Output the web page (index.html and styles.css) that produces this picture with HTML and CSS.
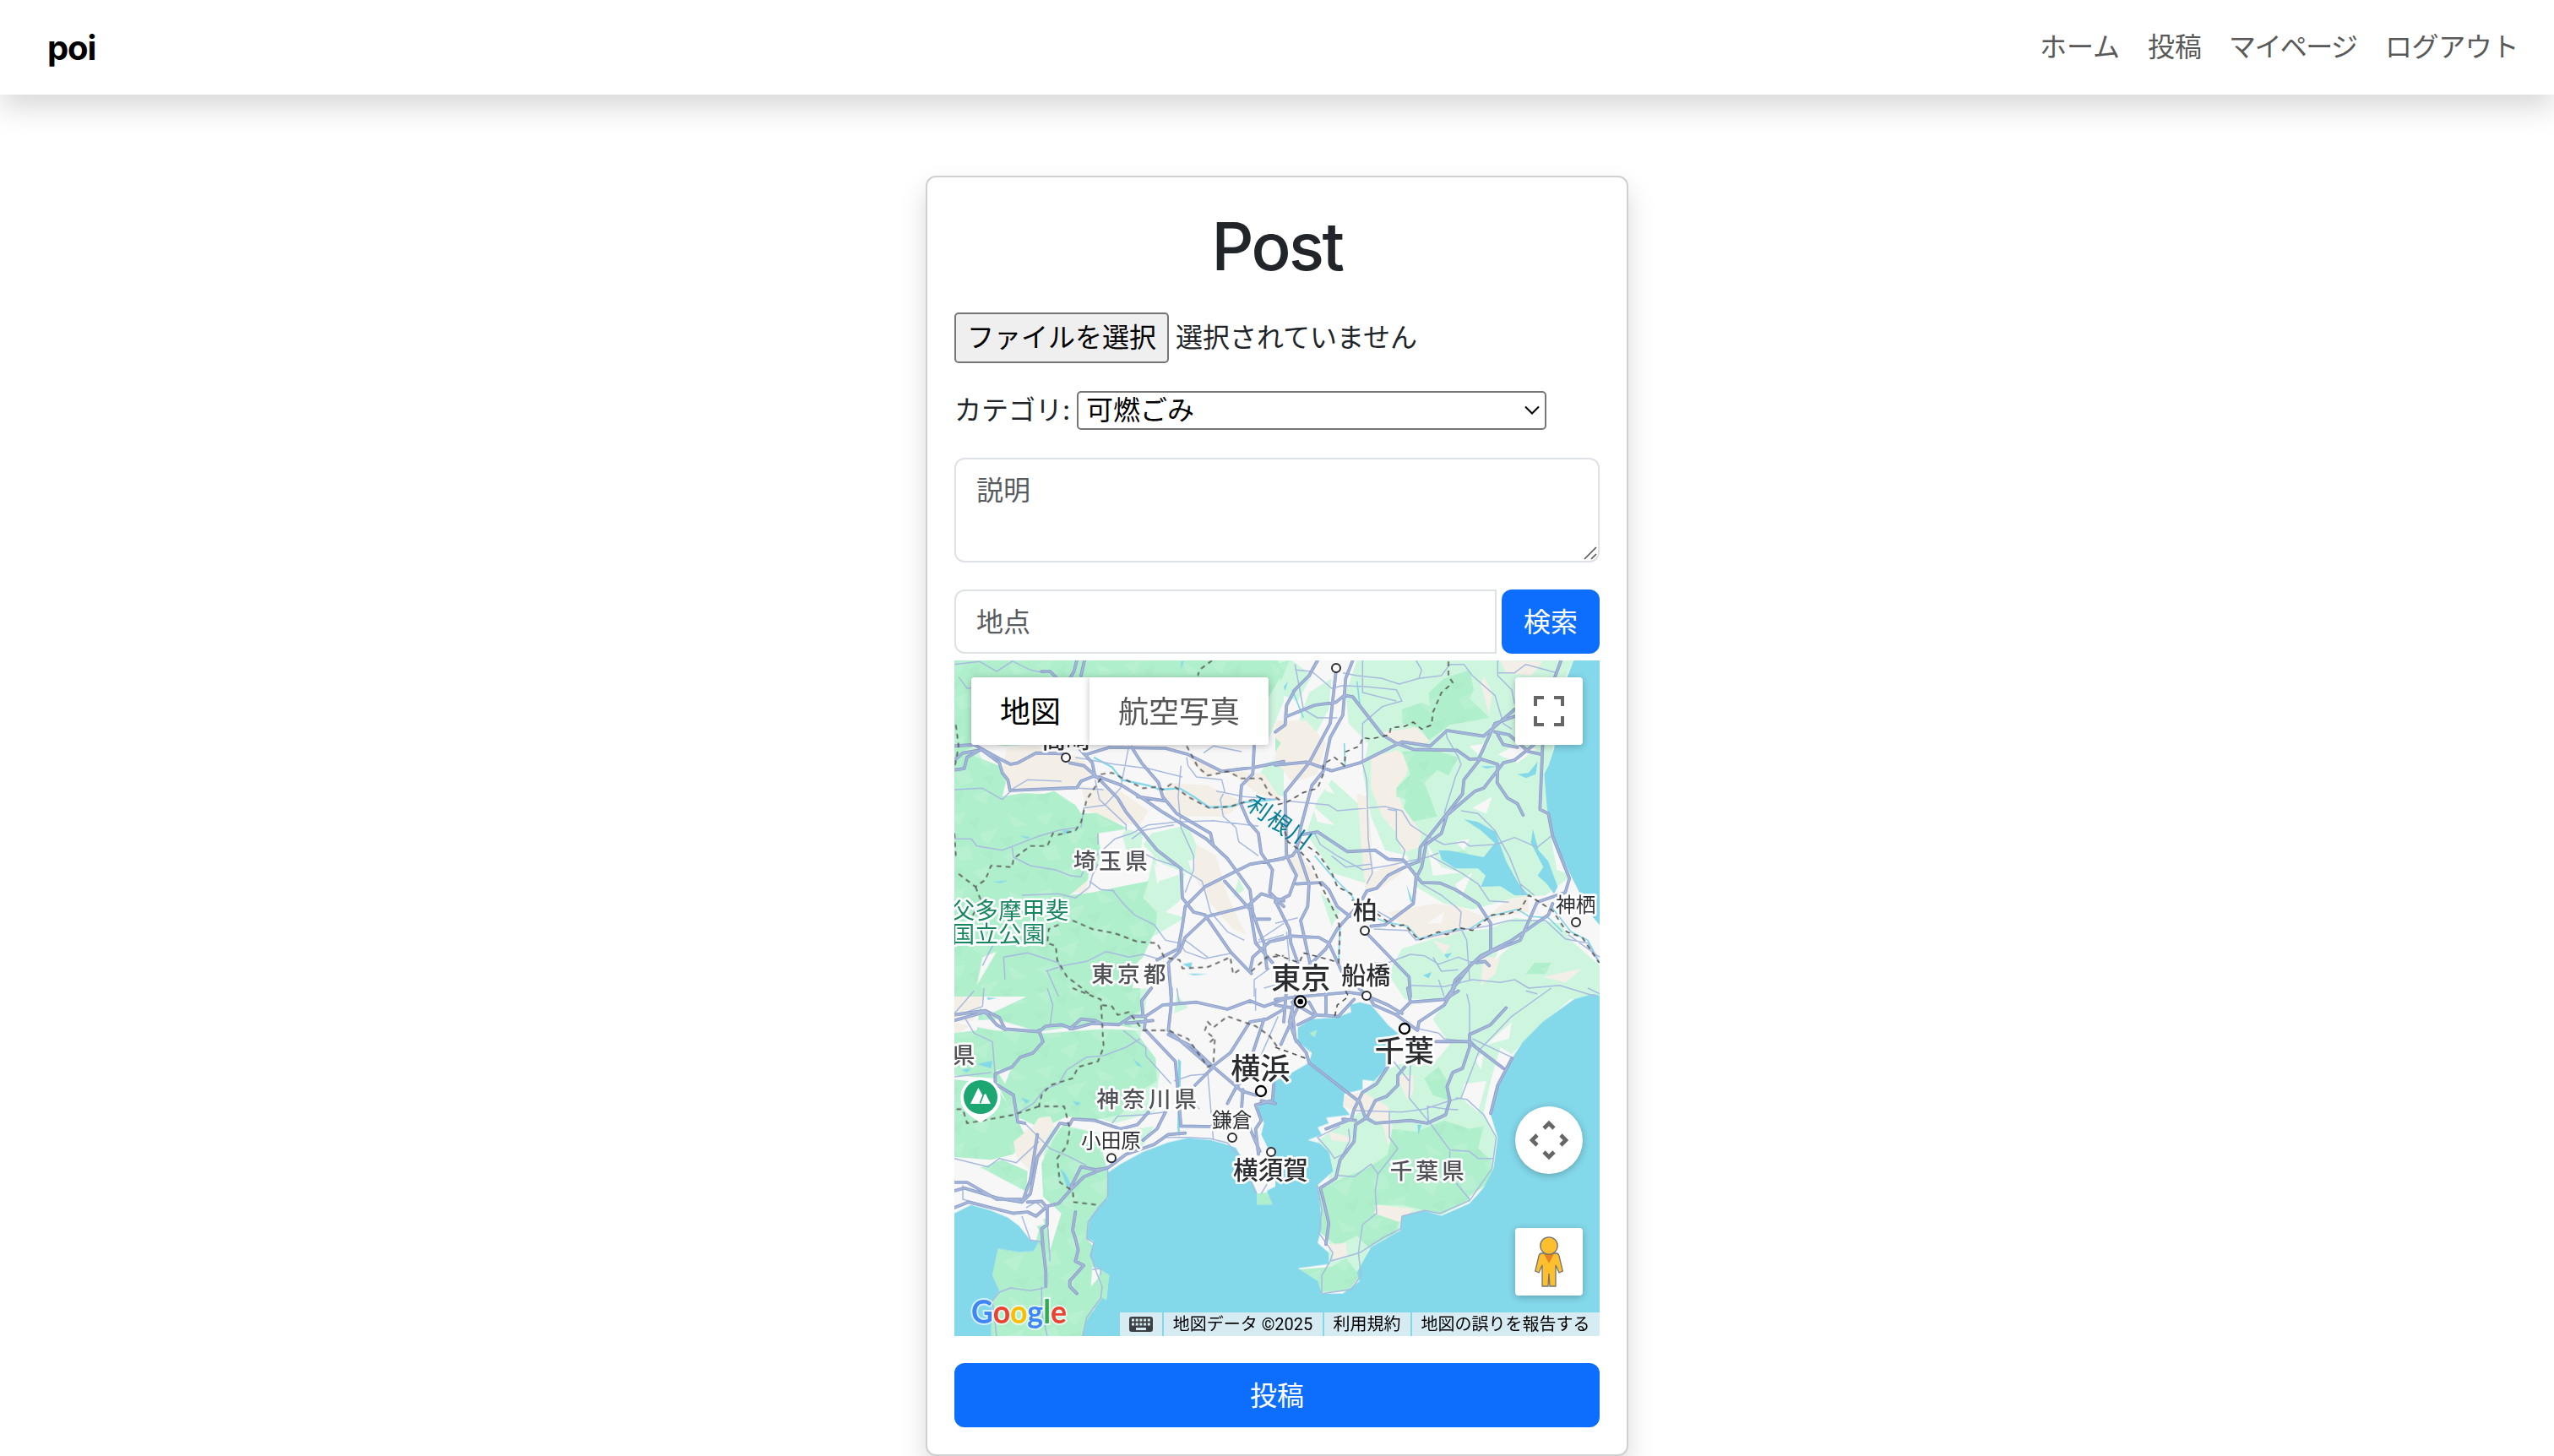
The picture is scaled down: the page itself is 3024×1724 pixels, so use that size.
FILE: index.html
```html
<!DOCTYPE html>
<html lang="ja">
<head>
<meta charset="utf-8">
<title>poi</title>
<link rel="stylesheet" href="styles.css">
</head>
<body>
<header class="navbar">
  <a class="brand">poi</a>
  <nav class="nav">
    <a class="nav-home">ホーム</a><a class="nav-post">投稿</a><a class="nav-mypage">マイページ</a><a class="nav-logout">ログアウト</a>
  </nav>
</header>
<main class="card">
  <h1>Post</h1>
  <div class="file-row"><button class="file-button">ファイルを選択</button><span>選択されていません</span></div>
  <div class="category-row">
    <label>カテゴリ:</label>
    <div class="select"><span>可燃ごみ</span><svg width="18" height="12" viewBox="0 0 18 12"><path d="M1 1.5 9 9.5 17 1.5" fill="none" stroke="#000" stroke-width="2"/></svg></div>
  </div>
  <div class="description"><span>説明</span><svg class="grip" width="16" height="16" viewBox="0 0 16 16"><path d="M1 15 15 1M9 15 15 9" stroke="#555" stroke-width="1.6"/></svg></div>
  <div class="search-row"><div class="place">地点</div><button class="primary">検索</button></div>

  <section class="map">
    <svg class="canvas" viewBox="0 0 2292 2400" width="764" height="800">
      <defs>
        <pattern id="facets" width="310" height="270" patternUnits="userSpaceOnUse">
          <path fill="#c0f3d8" d="M10 20 70 5 50 55ZM120 80 190 60 150 120 130 105ZM220 10 290 50 240 60ZM30 140 80 120 100 170 50 180ZM200 160 280 130 250 200ZM90 220 160 190 140 250Z"/>
          <path fill="#a7e8c5" d="M80 40 120 20 110 70ZM190 100 240 90 220 130ZM0 90 50 80 30 115ZM130 150 170 140 160 180ZM240 230 300 210 280 255ZM10 220 60 200 50 250Z"/>
        </pattern>
        <g id="forest">
          <g transform="translate(-30 -6)">
            <path d="M30 6H1180L1190 60 1140 150 1140 300H520L380 300 210 310 120 300 60 330 190 380 215 430 200 490 270 478 350 480 385 470 460 520 480 550 535 548 640 600 560 650 540 730 500 790 440 840 520 830 590 815 720 790 700 850 750 900 745 960 700 1060 670 1090 660 1200H30Z"/>
          </g>
          <g transform="translate(1140 -6)">
            <path d="M0 20 50 6 20 80ZM450 180 520 155 550 170 545 120 600 70 690 40 705 110 690 140 760 210 620 235 545 290 515 245 450 230ZM450 330 550 320 650 350 615 415 575 395 530 440 575 560 490 578 455 530 465 500 430 490 430 460 480 410ZM0 280 20 300 0 330ZM920 1080 980 1080 960 1120 890 1120ZM620 690 670 680 700 705 640 708Z"/>
          </g>
          <g transform="translate(-30 1164)">
            <path d="M120 70 160 90 350 0H690V80L640 110 700 190 745 250 750 330 700 360 620 450 520 470 430 455 340 500 240 450 170 320 30 310V160L110 150Z"/>
            <path d="M30 325 170 340 240 440 280 520 240 590 160 610 30 600ZM90 650 200 610 290 650 285 730 180 745 70 690ZM420 480 540 500 560 600 575 650V740L510 820 500 890 525 920 530 990 580 1020 570 1110 525 1140 485 1240H160L165 1110 190 1075 165 1020 185 925 260 938 310 935 330 860 310 820 360 820 370 930 410 800 345 740 340 620 380 540ZM1105 730 1145 725 1160 768 1105 772Z"/>
          </g>
          <g transform="translate(1140 1164)">
            <path d="M330 640 400 590 415 500 500 510 600 470 690 500 740 490 720 570 765 610 775 690 690 755 590 805 530 790 450 770 350 770 360 800 440 830 430 870 330 920 290 880 220 915 160 870 165 780 150 720 250 670ZM80 1000 160 1080 260 1075 300 1020 250 960 200 990ZM530 320 580 280 610 330 620 400 560 380Z"/>
          </g>
        </g>
        <g id="highways">
          <g transform="translate(-30 -6)">
            <path d="M340 45 370 45 400 75M440 70 455 45 465 6M480 60 492 6M30 310 100 305 190 355 230 375 255 370 320 335 415 337M30 395 65 390 75 350 125 322 190 370 200 405 220 430 228 468 465 458 480 435 530 415M30 360 60 335 120 325M440 370 490 380 545 428 610 495 640 545 750 680 835 745 840 850 880 900 920 910 1010 1040 1085 1118M545 420 625 450 705 500 770 545 925 640 1000 710 1080 820 1090 900 1110 960 1130 1010 1140 1100M470 315 520 370 530 420M500 340 580 315 780 318 860 340 980 400 1100 385 1200 365M660 315 695 370 755 440 770 490 820 550 940 620 950 665M680 490 780 505M1095 310 1090 410 1050 450 1045 510 1075 580 1110 620 1120 690 1160 750 1150 830 1200 880M1200 710 1080 730 920 810 850 880 840 950 825 1030 750 1070M1200 860 1120 835 1070 880 930 915 850 990 830 1040 790 1080 800 1200M1200 995 1150 1005 1090 1060 1080 1110M990 790 1080 890 1100 1010 1160 1080M1085 925 1150 925"/>
          </g>
          <g transform="translate(1140 -6)">
            <path d="M0 260 35 235 40 165 70 110 120 60 150 6M40 205 140 165 215 155 245 130 275 135 380 270 430 300 490 322 645 325 690 357 725 355 790 375M215 50 195 230 120 370 35 475 40 700 75 770 50 840 0 865M275 6 250 70 240 200 195 280 170 400 130 450 90 600 75 680 60 700 0 715M0 378 110 367 200 398 300 370 450 295 550 310 610 255 740 275 850 180M1015 6 980 100M725 350 780 230 850 205M780 260 830 270 900 330 945 340M790 270 810 305 860 315M925 300 850 360 810 370 740 460 710 470 610 555 590 620 535 660 520 740 500 780 490 870 390 945 340 950M725 360 670 430 665 480 515 670 510 720 470 735 400 770 360 815 325 825 300 870 220 960 180 1030 120 1090M790 375 788 440 825 495 860 515 880 555M950 300 940 535 970 550 985 630 1045 780 1030 830 930 865 870 1000 770 1040 700 1080 610 1200M75 675 90 625 150 615 255 685 355 680 400 712 455 715 520 795 585 797 640 820 720 870 765 940 765 1040M75 800 165 795 190 820 220 880 265 915M0 860 50 960 55 1010 80 1080M80 680 120 800 115 880 90 930 125 1090M0 1000 60 985 155 990 190 1010 240 1120 330 1200M330 980 475 1130 480 1200M985 870 970 910 840 1000 730 1055 640 1140 620 1200M715 1080 745 1075 760 1090"/>
          </g>
          <g transform="translate(-30 1164)">
            <path d="M30 95 140 80 190 105 210 145 330 155 355 135 410 130 450 145 520 125 615 130 660 100 710 100 770 60 890 50 1000 75 1080 45 1130 65 1200 40M30 115 140 85 180 130 210 147M440 145 480 110 530 115 560 130M700 100 695 45 730 0M800 0 800 60 790 150 940 280M710 100 705 145 815 260 835 490 950 492 1060 480M640 125 735 115M330 150 345 190 310 230 265 245 235 280 175 305 175 340 240 380 255 475 280 480M790 165 870 205 950 280 1050 365 1100 380M950 280 885 345M945 280 1010 230 1080 120 1140 110 1200 75M1130 110 1080 260 1000 410M1055 360 1050 430 1115 580M30 720 65 710 180 745 270 760 300 730 325 600 405 480 440 485 450 465 530 470 620 500 680 485 720 440M30 690 75 690 180 750 275 750 300 680 325 520M30 780 80 760 240 800 290 795 320 810 360 775 400 765 440 720 490 670 540 650 580 635 640 590 740 555 790 520 850 515M290 760 340 757 360 780 360 840 340 855 345 920 355 1010 355 1060M440 715 480 635 530 645 570 640M700 540 750 500 780 440M460 795 450 860 460 890 470 930 460 970 490 985 440 1040 440 1060 465 1085M1165 330 1160 400 1100 415 1120 470 1100 500 1110 590M1170 410 1120 400"/>
          </g>
          <g transform="translate(1140 1164)">
            <path d="M0 40 90 30 260 15 330 25 350 60 430 95 505 150M0 60 60 70 70 180 110 230 120 265 300 405 320 460 355 480 480 470 540 480 605 450 620 400 610 350 630 300 665 285 690 210 690 165 765 130 820 70M60 50 135 95 225 100 280 40M80 130 140 100M470 0 480 50 450 80 430 95M480 50 600 40 650 10M505 150 510 120 600 60 635 0M570 190H685L810 285M840 250 790 345 765 445M400 280 360 340 310 370 280 430 270 465 180 500M460 280 435 310 435 345 395 385 355 400 325 460 285 485 280 545 230 610 215 675 160 710 175 770 190 835 180 910M240 465 285 470M330 30 400 60 450 90M180 0 180 90M40 0 30 120M70 30 50 120 75 190M90 45 20 200M120 50 145 95"/>
          </g>
        </g>
      </defs>

      <rect width="2292" height="2400" fill="#f7f7f7"/>
      <g fill="#cef6df">
        <g transform="translate(-30 -6)"><path d="M30 6H1200V150L1140 300H100L30 350V6ZM330 360 410 350 450 410 410 430 300 405ZM1200 350 1140 370 1100 430 1160 480 1200 490ZM730 620 860 590 905 700 860 720 880 770 770 730 700 660ZM740 690 760 790 850 760 830 860 780 900 850 920 730 990 670 900 720 780ZM30 300 110 320 140 380 30 480ZM890 450 860 480 940 500ZM620 600 700 620 690 700 640 680ZM1040 780 1060 820 1020 850Z"/></g>
        <g transform="translate(1140 -6)"><path d="M0 6H60L130 60 80 150 0 120ZM290 6 1060 6 1010 110 985 330 955 420 965 530 1010 660 1040 780 960 840 850 850 700 890 600 870 500 810 470 700 390 680 340 560 310 400 330 300 260 230 250 120ZM120 120 200 70 190 180 130 290 80 230ZM150 500 200 430 300 520 310 700 330 800 200 760 110 620ZM450 1030 640 970 760 960 850 920 1010 940 1050 1000 1152 1090V1210H460L400 1120ZM160 830 230 900 200 950Z"/></g>
        <g transform="translate(-30 1164)"><path d="M30 0H120L60 110 30 120ZM560 20 720 0 690 180 760 300 740 440 600 480 500 450ZM620 510 740 490 700 560 620 580ZM820 20 860 70 810 90ZM340 480 420 500 560 590 450 700 350 640Z"/></g>
        <g transform="translate(1140 1164)"><path d="M640 0H960L1060 30 930 140 840 235 800 210 770 310 740 440 785 530 770 660 690 740 530 790 450 850 330 930 300 1040 160 1080 190 980 190 680 200 630 150 540 230 490 300 440 300 380 380 300 440 270 560 270 620 200 560 110Z"/></g>
      </g>
      <g fill="#f4efe6">
        <g transform="translate(-30 -6)"><path d="M215 320 310 310 480 350 520 400 480 450 300 465 225 460 200 400ZM480 450 620 470 720 540 690 590 600 580 500 540ZM790 440 930 450 1060 510 990 560 850 560 770 500ZM860 350 960 390 1130 410 1190 500 1110 480 1000 400 920 420ZM890 660 960 700 1000 840 1065 980 1020 960 940 870 880 770ZM510 740 550 770 500 830 440 830ZM90 1120 160 1140 150 1200 80 1200Z"/></g>
        <g transform="translate(1140 -6)"><path d="M0 220 110 220 180 300 150 410 60 440 0 360ZM340 350 430 325 480 350 465 410 430 460 450 520 520 620 510 670 450 690 430 620 380 560 340 460ZM290 480 330 490 350 760 430 720 450 760 370 820 320 820ZM400 900 560 870 650 880 750 920 820 860 900 840 900 900 780 920 680 960 600 990 510 1000 430 930ZM740 60 770 120 760 200 730 90ZM800 6 950 10 910 60 820 50ZM380 260 500 245 550 290 510 310 410 290ZM740 1060 800 1060 780 1120 730 1160ZM950 1130 1090 1100 1030 1150ZM560 1000 620 1020 600 1050ZM30 680 100 710 150 780 110 800 50 750Z"/></g>
        <g transform="translate(-30 1164)"><path d="M30 20 150 0 90 130 30 170ZM300 170 360 150 350 210 310 230ZM230 540 310 490 330 460 370 460 350 580 310 660 250 590ZM350 850 370 900 360 970 345 940Z"/></g>
        <g transform="translate(1140 1164)"><path d="M240 385 310 370 400 420 420 510 455 550 400 555 380 480 300 440 240 420ZM430 310 490 310 490 370 470 400ZM360 770 490 785 440 830 350 800ZM190 510 270 530 270 550 200 540ZM190 910 250 905 255 950 210 970Z"/></g>
      </g>
      <use href="#forest" fill="#b0efcc"/>
      <use href="#forest" fill="url(#facets)" opacity=".45"/>
      <path transform="translate(1140 1164)" fill="#f4efe6" d="M360 770 490 785 440 830 350 800ZM190 910 250 905 255 950 210 970Z"/>
      <path transform="translate(-30 1164)" fill="#f4efe6" d="M240 545 310 490 330 460 370 455 385 490 340 560 310 660 250 600Z"/>
      <g fill="#f7f7f7">
        <g transform="translate(-30 -6)"><path d="M540 620 640 605 600 660 550 690ZM510 735 560 740 540 800 500 820ZM740 730 780 760 750 800ZM130 1060 180 1040 110 1160Z"/></g>
        <g transform="translate(1140 -6)"><path d="M130 520 210 590 150 580ZM170 420 210 480 180 470ZM640 650 690 640 670 680ZM640 800 700 760 660 850ZM540 660 590 740 660 760 560 770ZM790 340 850 310 930 320 860 370ZM700 530 770 490 750 550ZM980 640 1030 760 1000 750ZM540 940 600 900 590 940ZM690 310 760 300 720 340ZM800 1010 860 1000 780 1070Z"/></g>
        <g transform="translate(-30 1164)"><path d="M30 120 180 110 330 155 560 120 700 150 560 145 350 160 170 150 70 130ZM180 290 230 290 210 340ZM440 470 560 480 650 500 560 520 430 490ZM30 620 130 640 300 730 320 640 330 740 350 840 300 850 80 760 30 780ZM520 990 550 1000 540 1030 515 1060Z"/></g>
        <g transform="translate(1140 1164)"><path d="M750 200 840 120 830 180ZM670 340 750 330 720 440 660 390ZM710 250 740 230 730 290ZM690 740 745 700 690 770Z"/></g>
      </g>
      <g fill="#83d8ea">
        <path transform="translate(1140 -6)" d="M1060 6 1035 70 1015 180 990 320 970 380 955 410 965 530 990 640 1045 760 1085 840 1130 920 1160 955V6ZM580 680 620 682 740 705 780 655 730 610 670 570 720 580 782 615 820 720 865 800 900 840 850 840 800 808 730 810 747 770 720 745 640 745 592 715ZM915 605 935 680 970 720 1003 810 990 835 965 800 932 770 952 740 908 655ZM860 410 900 405 932 365 925 410 890 424ZM600 1050 628 1045 610 1065ZM525 1125 555 1112 545 1135ZM30 100 45 80 35 115ZM730 382 790 382 750 390ZM465 800 488 860 480 865Z"/>
        <path transform="translate(-30 1164)" d="M575 655 620 625 700 582 790 548 860 532 940 540 985 552 1030 567 1060 620 1080 670 1105 725 1105 770 1160 768 1140 720 1200 690V620L1160 600 1120 520 1130 480 1110 430 1110 410 1165 390V340L1200 325V1240H485L500 1180 555 1100 570 1110 580 1020 530 990 510 950 525 900 500 890 510 820 545 770 575 745ZM30 800 90 770 160 790 220 815 260 845 300 895 330 900 310 935 260 938 185 925 165 1020 190 1075 165 1110 160 1240H30ZM405 640 425 660 445 700 430 705ZM110 270 165 258 160 285ZM55 290 90 285 75 300ZM825 250 835 260 830 530 822 500ZM665 250 700 280 680 275ZM450 400 480 408 465 418ZM265 388 300 400 285 410ZM145 32 180 35 150 42Z"/>
        <path transform="translate(1140 1164)" d="M0 330 60 300 120 265 130 230 80 190 80 140 130 110 215 105 270 85 265 60 300 50 340 60 400 130 440 165 400 220 390 290 350 330 310 325 310 360 245 375 240 420 265 450 180 460 190 480 150 495 165 520 115 540 155 550 190 580 205 650 150 700 160 780 165 850 150 905 190 940 190 980 80 995 150 1040 165 1085 240 1085 300 1040 290 1010 340 920 445 860 450 810 530 790 590 808 690 765 740 710 775 640 790 530 765 450 790 350 840 250 880 190 950 120 1060 40 1130 20 1160 30V1240H0ZM505 485 520 485 508 520Z"/>
        <path transform="translate(-30 -6)" d="M840 1085 875 1078 870 1100ZM860 1118 930 1120 880 1125ZM415 610 440 607 420 625ZM165 792 220 787 195 797ZM260 628 298 633 290 640ZM835 10 845 8 835 40Z"/>
      </g>
      <path transform="translate(1140 1164)" fill="#b0efcc" d="M120 160 148 148 140 175Z"/>
      <g fill="none" stroke="#83d8ea" stroke-width="7">
        <path transform="translate(-30 -6)" d="M525 350 590 385 625 430 720 450 760 465 830 460 880 490 935 528 1010 525 1060 510 1170 500" />
        <path transform="translate(1140 -6)" stroke-width="5" d="M290 80 300 160M60 110 100 210M245 300 248 380M140 700 200 770 270 840 310 900 390 935 470 950 510 995 640 960 690 960 760 915 860 890 900 915 970 920 1020 970M980 880 1050 970 1110 1000 1152 1080M230 940 225 1080"/>
      </g>
      <g class="local-roads">
        <path transform="translate(-30 -6)" d="M45 65 75 105 140 100M30 20 120 10 180 45 240 6M240 10 300 40 350 50M30 465 130 460 200 500 240 460 290 430 410 435M460 350 600 375 720 390 840 420M650 310 620 460 565 520 490 530 480 600M530 430 545 500 640 590 640 610M470 460 560 465M855 350 860 380 890 420 980 430 990 470 975 500 985 560 1030 600M835 380 825 490 835 600 880 700 880 750 850 830M30 640 90 640 110 665 200 680 240 665 330 630 400 610 460 600M235 670 240 705 300 735 390 750 440 770 480 775 495 735 600 640 660 620 720 590 820 580 950 575 1110 595M590 820 630 870 670 910 740 945 780 1000 830 1010 850 1040 920 1065 1020 1045M400 835 460 850 510 810 520 770 540 730M510 790 550 820 600 825M270 840 400 835M355 1110 420 1090 500 1075 570 1040 650 1060 700 1050 750 1065M360 1110 400 1200M210 1140 205 1060 290 1045 400 1080 410 1110M130 1090 160 1030 180 1000M915 335 950 310 1050 330M960 470 1060 490 1180 500M700 690 750 715 830 740 910 790 940 900 1000 970 1060 1000M850 1000 930 1060M660 640 700 610 810 590M1200 980 1100 1010M540 620 540 660M1095 1200V1140L1150 1100M1200 1150 1130 1170M1110 1000 1200 940M1030 600 1040 650 1110 700"/>
        <path transform="translate(1140 -6)" d="M70 40 130 45 200 105 240 95 330 100 430 110 450 150 380 170 310 230 310 370 325 430 330 640 345 760 325 800M70 20 100 180 150 210 220 210M310 6 310 120 430 150M240 50 290 60 380 70 440 90 510 70 590 60 620 20 670 20 700 60 780 130 810 230 840 250M500 6 520 40 510 70M790 50 850 50 890 20 1000 50M790 6 790 60 840 110 850 160M40 505 190 520 220 540 390 525 450 540 480 590 540 630 600 660 670 650 690 665 780 660 850 635 930 670 980 630M400 535 430 540 430 640 460 680 450 720M660 540 720 550 780 610 830 700 870 800 920 840M600 550 640 420 660 375 650 350 610 280 605 250M140 620 160 660 220 700 310 750 400 735 540 705 580 690M200 700 250 740 340 730M550 700 660 760 720 800 760 860 830 865M520 800 590 840 640 880 660 900 655 950 680 1000 690 1140M350 960 470 965 500 1000 650 965 750 950 830 930 960 930 1030 995 1110 1010 1150 1080M330 1080 400 1080 480 1050 530 1055 580 1085 650 1060 700 1080M560 1060 590 1110 650 1105M0 940 80 920M1040 980 1152 1060M480 1160 600 1165 700 1140 800 1150 850 1140 900 1170 1010 1160 1140 1200M580 1140 600 1200M870 800 880 840M360 895 420 930M40 970 50 1070 30 1130"/>
        <path transform="translate(-30 1164)" d="M30 90 100 10M60 90 130 65 135 0M70 110 100 160 165 190 175 310M30 315 160 300M245 450 310 410 350 360 400 340 430 290 500 245 560 240 640 210 690 180M280 480 330 530 370 570 430 595 500 630M30 605 150 635 190 605 250 620 330 545M60 700V750L130 770M360 0 380 60 370 130M630 150 680 190 710 210 710 240 800 340M590 480 610 455 700 450 780 440M1070 490 1060 440M930 300 950 540M810 330 870 310 930 305M835 350 900 430M820 0 830 60M780 530 860 530 940 535 1000 550 1060 620 1100 730M575 640V740L505 830 500 890 525 905 515 950 535 1010 555 1060 550 1100 500 1170 485 1236M270 810 300 895 335 900 345 930M350 1065 300 1075 230 1065 190 1080 165 1110 180 1236M340 1060 340 1150 360 1236M285 780 320 760 350 785 330 800M520 1000 550 995 550 1020M360 820 370 970M1100 0 1100 80M1180 100 1110 260 1000 400M1120 730 1150 680"/>
        <path transform="translate(1140 1164)" d="M680 20 690 60V180L725 220 660 390 620 400 530 430 450 440 285 435M480 270 475 390 550 480 620 575 690 580 720 605 775 605M510 145 580 160 600 180 690 190M640 390 680 395 740 450 785 530 770 640 690 755 585 800 530 790 450 810 445 855 385 885 300 940 195 970M725 220 840 100 980 0M890 10 930 20M545 480 540 420 610 430 650 432M405 440 405 530 435 570 365 660 355 720 360 800 310 840 295 940 305 1020 270 1070 165 1085 165 1020 195 970 205 940M365 660 340 625 280 670 215 665M230 490 150 530 190 575 210 605 240 590 265 540 260 500M150 700 165 790 155 870 205 940M640 690 690 750M620 580 620 650M420 260 475 330M700 180 850 250M1110 0 1152 20"/>
      </g>
      <use href="#highways" class="road-edge"/>
      <use href="#highways" class="road-fill"/>
      <g class="borders">
        <path transform="translate(-30 -6)" d="M945 6 900 40 895 60M35 235 45 310 30 390M855 310 895 385 930 415 1000 400 1050 425 1120 425 1150 480 1200 510M550 410 590 405 700 460 750 455 770 465 800 445 860 490 935 530 1010 525 1090 500M550 425 500 500 480 580 460 610 400 625 380 620 360 665 300 665 240 710 235 740 160 735 140 785 105 810 40 760M105 810 125 860 90 920M450 930 520 960 600 975 680 1005 750 1010 775 1060 830 1070 840 1100 930 1095 1010 1060 1020 1120 1050 1100M400 945 365 960 360 1010 390 1020 395 1070 430 1130 470 1160 520 1200M1085 1110 1140 1060 1200 1055M30 620 35 700"/>
        <path transform="translate(1140 -6)" d="M615 10V60L630 85 590 120 560 190 555 235 520 250 490 225 460 240 410 245 405 270 340 285 310 280 300 310 250 330 245 380 210 350 170 375 170 410 150 460 100 475 40 510 0 520M0 560 30 600 45 650 80 675 130 730 150 780 220 920 230 960 225 1080 195 1070 100 1045 85 1080 0 1050M90 650 150 690 200 760 220 810 270 835 275 860M360 905 420 950 460 945 510 1000 580 970 610 980 650 955 700 965 770 910 830 905 870 890 900 840 985 895 1035 970 1090 990 1150 1080"/>
        <path transform="translate(-30 1164)" d="M450 0 550 40 555 130 560 210 540 260 470 280 450 320 370 345 340 380 330 420 420 420 440 500 430 560 395 605 405 690 450 720 455 760 540 770M555 60 590 65 610 95 650 85 700 150 790 150 860 180 930 280 950 270 955 180 920 150 930 120 950 140 1000 100 1100 135 1150 170 1185 220M330 420 240 450 75 480 60 430 30 430M950 180 930 200"/>
        <path transform="translate(1140 1164)" d="M250 10 260 30 220 60 210 105M0 210 110 250"/>
      </g>
      <g class="labels">
        <g class="prefecture">
          <text x="422" y="740">埼玉県</text><text x="487" y="1142">東京都</text><text x="-7" y="1431">県</text><text x="505" y="1588">神奈川県</text><text x="1547" y="1843">千葉県</text>
        </g>
        <g class="park"><text x="-10" y="919">父多摩甲斐</text><text x="-10" y="1002">国立公園</text></g>
        <text class="river" transform="translate(1034 524) rotate(36)">利根川</text>
        <text x="310" y="311" font-size="87">高崎</text>
        <text x="1126" y="1166" font-size="105">東京</text><text x="982" y="1487" font-size="105">横浜</text><text x="1493" y="1426" font-size="105">千葉</text>
        <text x="1415" y="922" font-size="87">柏</text><text x="1375" y="1151" font-size="87">船橋</text><text x="990" y="1842" font-size="89">横須賀</text>
        <g font-weight="400"><text x="2136" y="894" font-size="71">神栖</text><text x="915" y="1660" font-size="71">鎌倉</text><text x="450" y="1732" font-size="71">小田原</text></g>
      </g>
      <g fill="#fff" stroke="#2b2d30" stroke-width="6">
        <circle cx="1356" cy="27" r="15"/><circle cx="396" cy="345" r="15"/><circle cx="1458" cy="960" r="15"/><circle cx="2208" cy="930" r="15"/><circle cx="1464" cy="1191" r="15"/><circle cx="987" cy="1695" r="15"/><circle cx="1125" cy="1746" r="15"/><circle cx="558" cy="1768" r="15"/>
        <g stroke="#000" stroke-width="7"><circle cx="1599" cy="1308" r="18"/><circle cx="1089" cy="1530" r="18"/><circle cx="1229" cy="1212" r="20"/></g>
        <circle cx="1229" cy="1212" r="10" fill="#000" stroke="none"/>
      </g>
      <path d="M93 1642C55 1616 22 1600 22 1552A71 71 0 0 1 164 1552C164 1600 130 1616 93 1642Z" fill="#fff"/>
      <circle cx="93" cy="1551" r="60" fill="#1ba672"/>
      <path d="M57 1575 85 1518 101 1546 111 1539 129 1575Z" fill="#fff"/><path d="M91 1573 103 1544" stroke="#1ba672" stroke-width="5"/>
    </svg>
    <div class="map-types"><button class="active">地図</button><button>航空写真</button></div>
    <button class="control fullscreen"><svg width="36" height="36" viewBox="0 0 36 36"><path d="M2 12V2H12M24 2H34V12M34 24V34H24M12 34H2V24" fill="none" stroke="#666" stroke-width="4"/></svg></button>
    <button class="control pan"><svg width="46" height="46" viewBox="0 0 46 46"><path d="M17 9 23 3 29 9M17 37 23 43 29 37M9 17 3 23 9 29M37 17 43 23 37 29" fill="none" stroke="#666" stroke-width="4.6"/></svg></button>
    <button class="control pegman"><svg width="34" height="60" viewBox="0 0 34 60"><path d="M8 20H26Q28 20 29 23L33.300 41 29 43 25 34V59H18L17 44 16 59H9V34L5 43 .8 41 5 23Q6 20 8 20Z" fill="#fdbf2d" stroke="#737373" stroke-width="1.300"/><path d="M11 20.500H23L17 32Z" fill="#e38125"/><circle cx="17" cy="11" r="10.200" fill="#fdbf2d" stroke="#737373" stroke-width="1.300"/></svg></button>
    <svg class="google" width="130" height="50" viewBox="0 0 130 50"><text x="8" y="35" textLength="113" lengthAdjust="spacingAndGlyphs"><tspan fill="#4285f4">G</tspan><tspan fill="#ea4335">o</tspan><tspan fill="#fbbc04">o</tspan><tspan fill="#4285f4">g</tspan><tspan fill="#34a853">l</tspan><tspan fill="#ea4335">e</tspan></text></svg>
    <div class="attribution">
      <span class="keys"><svg width="28" height="18" viewBox="0 0 28 18"><rect width="28" height="18" rx="3" fill="#3c4043"/><path d="M3 4H25M3 9H25" stroke="#d6ebf2" stroke-width="3.200" stroke-dasharray="3 1.700"/><path d="M8 14.500H20" stroke="#d6ebf2" stroke-width="3"/></svg></span><span class="data">地図データ ©2025</span><span class="terms">利用規約</span><span class="report">地図の誤りを報告する</span>
    </div>
  </section>
  <button class="primary submit">投稿</button>
</main>
</body>
</html>
```
FILE: styles.css
```css
* { box-sizing: border-box; }
body { margin: 0; height: 1724px; overflow: hidden; background: #fff; color: #212529; font: 32px/48px Inter, "Noto Sans CJK JP", sans-serif; }
button { margin: 0; padding: 0; border: 0; font: inherit; }
.navbar { height: 112px; padding: 0 40px 0 56px; display: flex; justify-content: space-between; align-items: center; background: #fff; box-shadow: 0 16px 32px rgba(0,0,0,.15); }
.brand { color: #000; font-size: 40px; font-weight: 700; letter-spacing: -1.1px; padding-top: 2px; }
.nav { display: flex; gap: 32px; color: #595959; white-space: nowrap; }
.nav-home { width: 96px; }
.nav-post { width: 64px; }
.nav-mypage { width: 153px; letter-spacing: -1.6px; }
.nav-logout { width: 160px; letter-spacing: -.4px; }
.card { width: 832px; height: 1516px; margin: 96px auto 0; padding: 30px 32px 32px; border: 2px solid #cfd0d1; border-radius: 12px; background: #fff; box-shadow: 0 16px 32px rgba(0,0,0,.15); display: flex; flex-direction: column; }
h1 { margin: 7px 0 33px; height: 90px; font-size: 78px; line-height: 90px; font-weight: 500; text-align: center; letter-spacing: -2.6px; }
.file-row { height: 60px; display: flex; align-items: center; gap: 8px; }
.file-button { width: 254px; height: 60px; border: 2px solid #767676; border-radius: 5px; background: #efefef; color: #000; white-space: nowrap; }
.category-row { height: 46px; margin-top: 33px; display: flex; align-items: center; }
.category-row label { width: 145px; white-space: nowrap; }
.select { width: 556px; height: 46px; padding: 0 6px 0 9px; display: flex; align-items: center; justify-content: space-between; border: 2px solid #767676; border-radius: 5px; color: #000; }
.description { position: relative; height: 124px; margin-top: 33px; padding: 13px 24px; border: 2px solid #dee2e6; border-radius: 12px; color: #595c5f; }
.grip { position: absolute; right: 1px; bottom: 1px; }
.search-row { height: 76px; margin-top: 32px; display: flex; gap: 6px; }
.place { flex: 1; padding: 13px 24px; border: 2px solid #dee2e6; border-radius: 12px 0 0 12px; color: #595c5f; }
.primary { width: 116px; height: 76px; padding-top: 1px; border-radius: 12px; background: #0d6efd; color: #fff; }
.primary.submit { width: 100%; margin-top: 32px; }
.map { position: relative; width: 764px; height: 800px; flex: none; margin-top: 8px; overflow: hidden; }
.canvas { display: block; }
.local-roads { fill: none; stroke: #a8bbdf; stroke-width: 4.5; stroke-linejoin: round; }
.road-edge { fill: none; stroke: #8195c2; stroke-width: 11; stroke-linejoin: round; stroke-linecap: round; }
.road-fill { fill: none; stroke: #a8b8db; stroke-width: 7; stroke-linejoin: round; stroke-linecap: round; }
.borders { fill: none; stroke: #555; stroke-width: 5; stroke-dasharray: 17 15; }
.labels { font-family: "Noto Sans CJK JP", sans-serif; fill: #2b2d30; stroke: #fff; stroke-width: 16; stroke-linejoin: round; paint-order: stroke; font-weight: 500; }
.prefecture { font-size: 80px; letter-spacing: 12px; fill: #505257; }
.park { font-size: 82px; letter-spacing: 1.5px; fill: #16865f; font-weight: 400; }
.river { font-size: 82px; letter-spacing: 5px; fill: #087f98; stroke: none; font-weight: 400; }
.map-types { position: absolute; left: 20px; top: 20px; width: 352px; height: 80px; display: flex; border-radius: 4px; background: #fff; box-shadow: 0 1px 8px rgba(0,0,0,.25); overflow: hidden; font-size: 36px; }
.map-types button { width: 212px; background: #fff; color: #565656; padding-top: 2px; }
.map-types .active { width: 140px; color: #000; }
.map-types button + button { position: relative; box-shadow: 0 0 8px rgba(0,0,0,.25); }
.control { position: absolute; right: 20px; width: 80px; height: 80px; display: flex; align-items: center; justify-content: center; background: #fff; border-radius: 4px; box-shadow: 0 2px 8px rgba(0,0,0,.25); }
.fullscreen { top: 20px; }
.pan { top: 528px; border-radius: 50%; }
.pegman { top: 672px; }
.google { position: absolute; left: 12px; top: 750px; font: 700 39px Lato, sans-serif; stroke: rgba(255,255,255,.65); stroke-width: 4px; paint-order: stroke; }
.attribution { position: absolute; right: 0; bottom: 0; height: 28px; display: flex; gap: 2px; font: 20px/29px Roboto, "Noto Sans CJK JP", sans-serif; color: #000; text-align: center; white-space: nowrap; }
.attribution span { height: 28px; padding-right: 1px; background: #d6ebf2; }
.attribution .keys { width: 50px; display: flex; align-items: center; justify-content: center; }
.data { width: 188px; }
.terms { width: 102px; }
.report { width: 222px; }
```
